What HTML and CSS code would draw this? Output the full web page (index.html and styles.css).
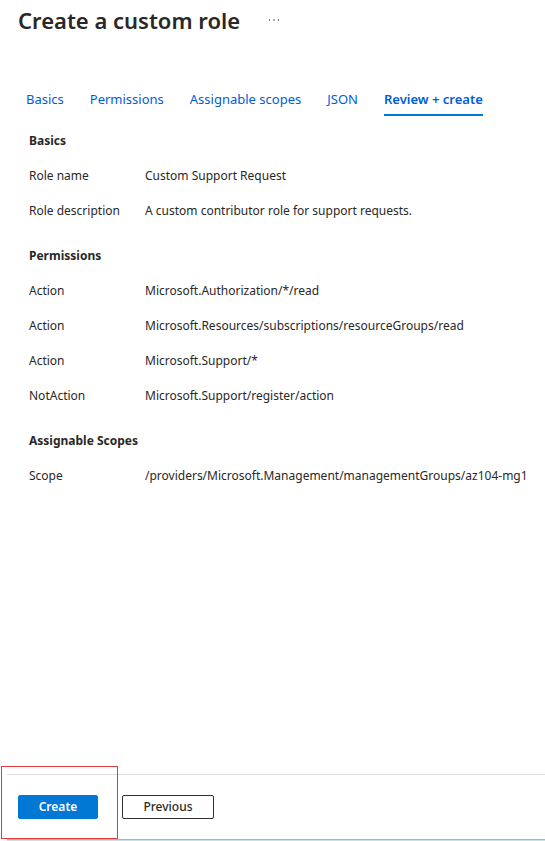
FILE: index.html
```html
<!DOCTYPE html>
<html lang="en">
<head>
<meta charset="utf-8">
<meta name="viewport" content="width=device-width, initial-scale=1">
<title>Create a custom role</title>
<link rel="stylesheet" href="styles.css">
</head>
<body>
<header class="header">
  <h1 class="title">Create a custom role</h1>
  <button class="more" type="button" aria-label="More options">
    <svg width="11" height="2" viewBox="0 0 11 2" shape-rendering="crispEdges"><path fill="#777" d="M0 0h1v2H0zM9 0h1v2H9z"/><path fill="#aaa" d="M4 0h2v2H4z"/></svg>
  </button>
</header>
<nav class="tabs">
  <a class="tab" href="#basics">Basics</a>
  <a class="tab" href="#permissions">Permissions</a>
  <a class="tab" href="#scopes">Assignable scopes</a>
  <a class="tab" href="#json">JSON</a>
  <a class="tab tab-active" href="#review" aria-current="page">Review + create</a>
</nav>
<main class="review">
  <section class="section">
    <h2 class="heading">Basics</h2>
    <dl class="fields">
      <dt>Role name</dt><dd>Custom Support Request</dd>
      <dt>Role description</dt><dd>A custom contributor role for support requests.</dd>
    </dl>
  </section>
  <section class="section">
    <h2 class="heading">Permissions</h2>
    <dl class="fields">
      <dt>Action</dt><dd>Microsoft.Authorization/*/read</dd>
      <dt>Action</dt><dd>Microsoft.Resources/subscriptions/resourceGroups/read</dd>
      <dt>Action</dt><dd>Microsoft.Support/*</dd>
      <dt>NotAction</dt><dd>Microsoft.Support/register/action</dd>
    </dl>
  </section>
  <section class="section">
    <h2 class="heading">Assignable Scopes</h2>
    <dl class="fields">
      <dt>Scope</dt><dd>/providers/Microsoft.Management/managementGroups/az104-mg1</dd>
    </dl>
  </section>
</main>
<footer class="footer">
  <button class="button button-primary" type="button">Create</button>
  <button class="button button-secondary" type="button">Previous</button>
  <div class="highlight"></div>
</footer>
</body>
</html>
```

FILE: styles.css
```css
* {
  box-sizing: border-box;
}

body {
  display: flex;
  flex-direction: column;
  min-height: 100vh;
  margin: 0;
  background: #fff;
  color: #292827;
  font: 12px/20px "Segoe UI", "Noto Sans", sans-serif;
}

.header {
  display: flex;
  align-items: center;
  gap: 29px;
  height: 40px;
  padding-left: 18px;
}

.title {
  margin: 0;
  font-size: 22px;
  font-weight: 600;
  line-height: 30px;
}

.more {
  display: flex;
  padding: 0;
  border: 0;
  background: none;
}

.tabs {
  display: flex;
  gap: 26px;
  margin-top: 49px;
  padding-left: 26px;
  white-space: nowrap;
}

.tab {
  padding-bottom: 5px;
  border-bottom: 2px solid transparent;
  color: #015cda;
  font-size: 13px;
  line-height: 20px;
  text-decoration: none;
}

.tab-active {
  border-color: #0078d4;
  font-weight: 600;
}

.review {
  flex: 1;
  padding: 15px 0 24px 29px;
}

.section {
  margin-bottom: 25px;
}

.heading {
  margin: 0 0 15px;
  font-size: 12px;
  font-weight: 700;
  line-height: 20px;
}

.fields {
  display: grid;
  grid-template-columns: 116px 1fr;
  row-gap: 15px;
  margin: 0;
}

.fields dd {
  margin: 0;
}

.footer {
  position: relative;
  display: flex;
  gap: 24px;
  margin: 0 0 1px 7px;
  padding: 20px 0 20px 11px;
  border-top: 1px solid #dcdcdc;
  border-bottom: 1px solid #a3b9be;
  box-shadow: 0 1px #c5e3e6;
}

.button {
  height: 24px;
  padding: 0;
  border: 1px solid #323130;
  border-radius: 2px;
  background: #fff;
  color: #292827;
  font: 600 12px/20px "Segoe UI", "Noto Sans", sans-serif;
}

.button-primary {
  width: 80px;
  border-color: #0078d4;
  background: #0078d4;
  color: #fff;
}

.button-secondary {
  width: 92px;
  font-weight: 500;
}

.highlight {
  position: absolute;
  top: -9px;
  bottom: 0;
  left: -6px;
  width: 117px;
  border: 1px solid #e43b3f;
  pointer-events: none;
}
```
